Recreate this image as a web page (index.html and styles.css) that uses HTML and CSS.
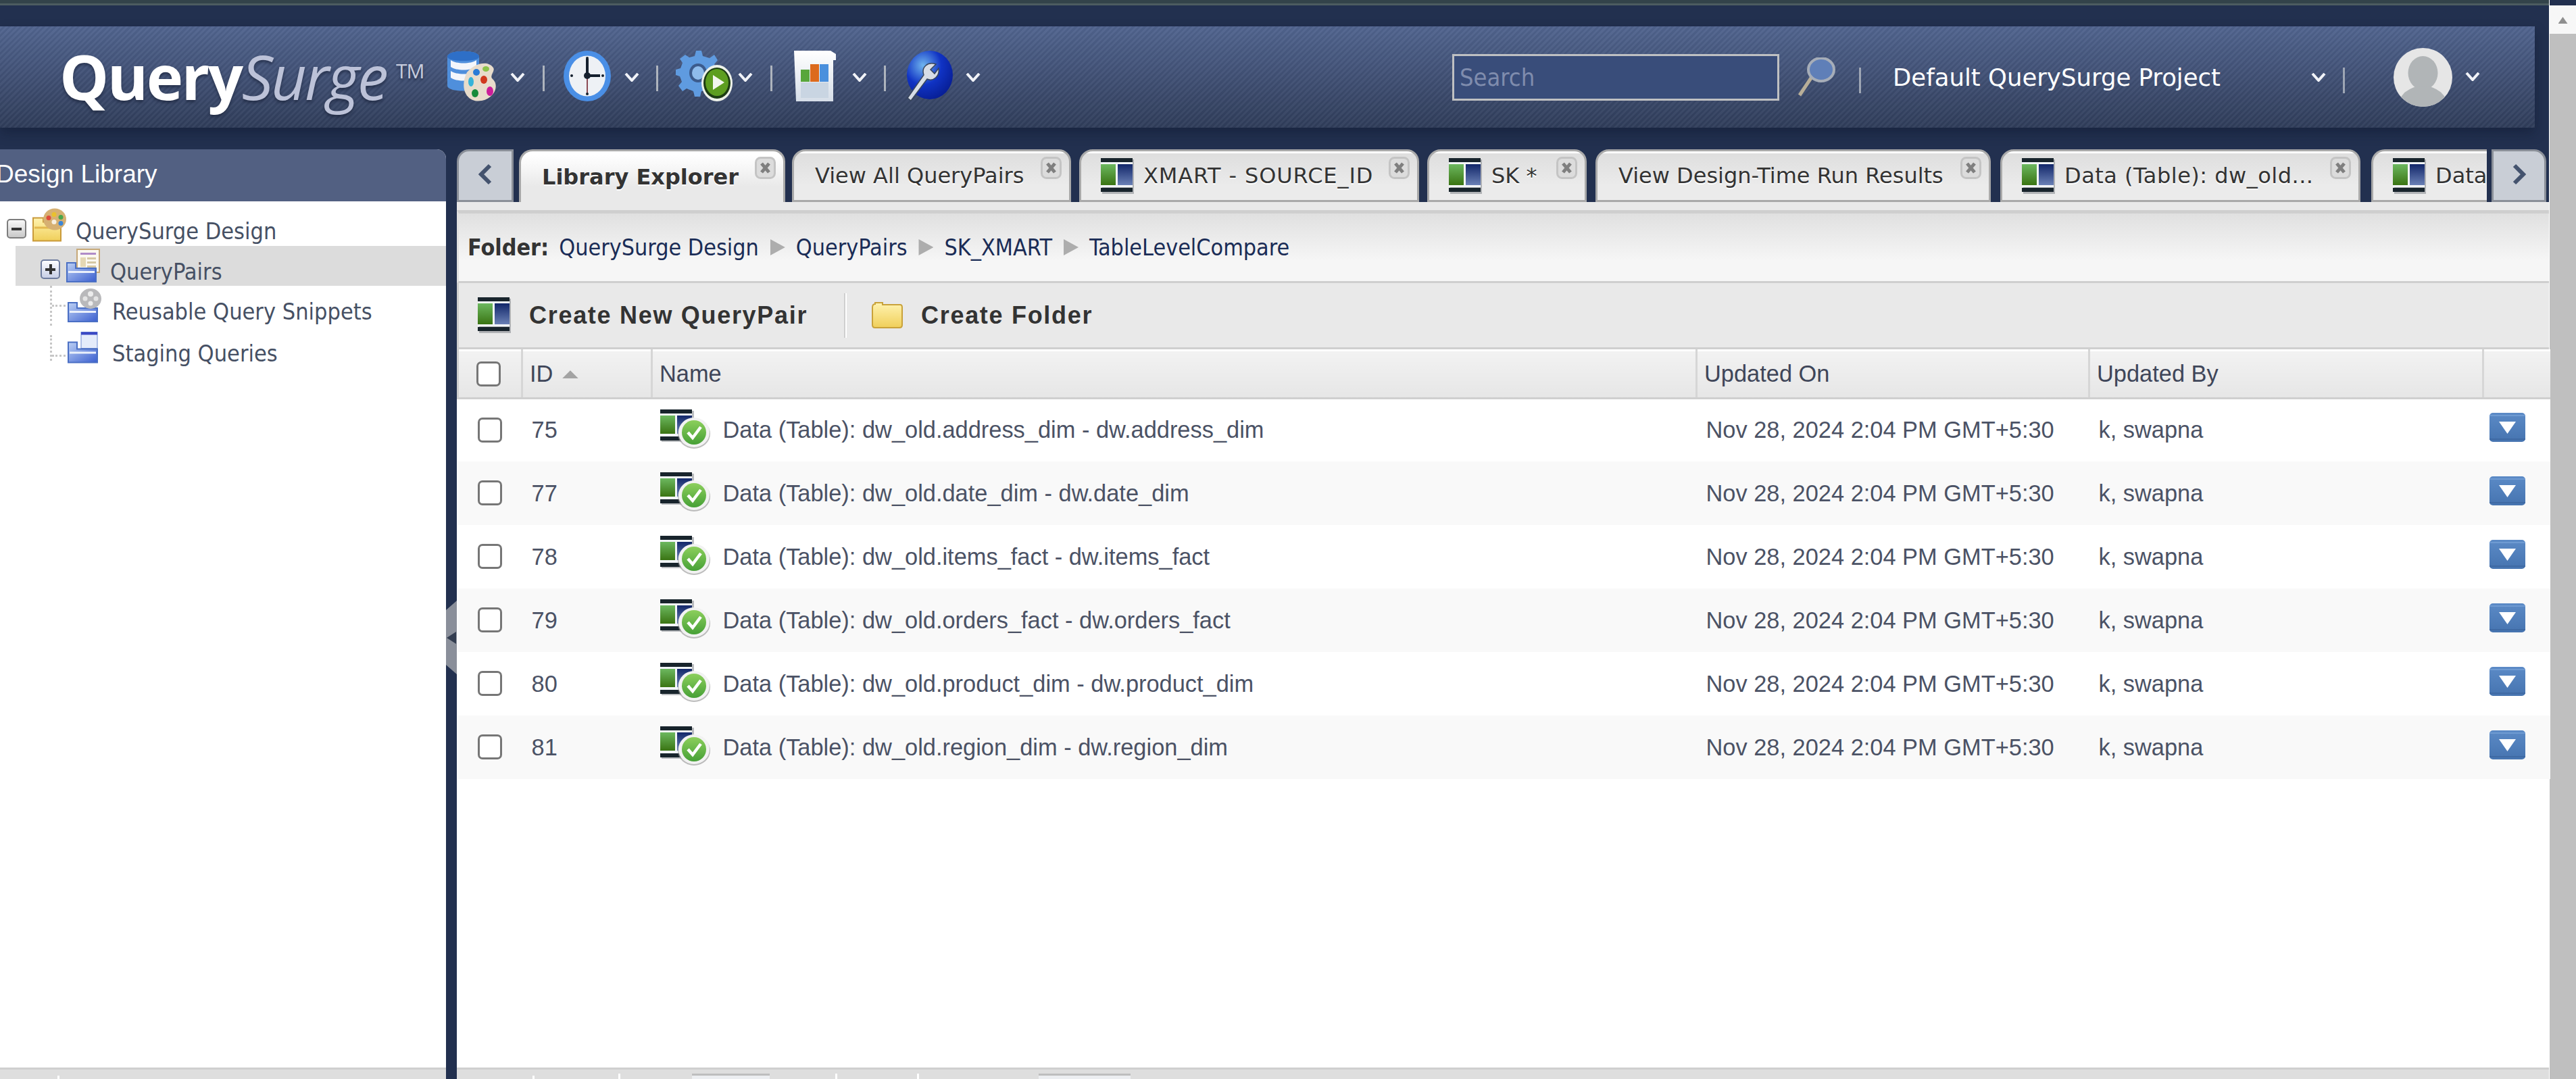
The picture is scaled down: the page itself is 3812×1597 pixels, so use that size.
FILE: index.html
```html
<!DOCTYPE html>
<html lang="en">
<head>
<meta charset="utf-8">
<title>QuerySurge</title>
<link rel="stylesheet" href="styles.css">
</head>
<body>
<svg class="sprite" width="0" height="0" aria-hidden="true">
  <defs>
    <linearGradient id="gGreen" x1="0" y1="0" x2="0" y2="1"><stop offset="0" stop-color="#6cb85f"/><stop offset="1" stop-color="#3a7413"/></linearGradient>
    <linearGradient id="gNavy" x1="0" y1="0" x2="0" y2="1"><stop offset="0" stop-color="#12276a"/><stop offset="1" stop-color="#6a80b5"/></linearGradient>
    <linearGradient id="gYellow" x1="0" y1="0" x2="0" y2="1"><stop offset="0" stop-color="#fff3b0"/><stop offset="1" stop-color="#f0cf5a"/></linearGradient>
    <linearGradient id="gBlueF" x1="0" y1="0" x2="1" y2="1"><stop offset="0" stop-color="#bcd0f4"/><stop offset="1" stop-color="#3b5fd0"/></linearGradient>
    <linearGradient id="gBtn" x1="0" y1="0" x2="0" y2="1"><stop offset="0" stop-color="#5b8ac6"/><stop offset="1" stop-color="#4674b0"/></linearGradient>
    <linearGradient id="gCheck" x1="0" y1="0" x2="0" y2="1"><stop offset="0" stop-color="#8ccf5c"/><stop offset="1" stop-color="#46a036"/></linearGradient>
    <radialGradient id="gGlobe" cx=".35" cy=".3" r=".8"><stop offset="0" stop-color="#6fb4ee"/><stop offset=".5" stop-color="#1033c4"/><stop offset="1" stop-color="#061b8e"/></radialGradient>
    <linearGradient id="gPaper" x1="0" y1="0" x2="0" y2="1"><stop offset="0" stop-color="#ffffff"/><stop offset="1" stop-color="#d6dee8"/></linearGradient>

    <symbol id="i-chev" viewBox="0 0 22 13"><path d="M2 1 L11 11 L20 1" fill="none" stroke="#f1f3f8" stroke-width="4"/></symbol>

    <symbol id="i-pair" viewBox="0 0 49 53" preserveAspectRatio="none">
      <rect x="2" y="2" width="47" height="51" fill="#6b6f75" opacity=".45"/>
      <rect width="47" height="6" fill="#18242c"/>
      <rect y="6" width="47" height="37" fill="#f2f5f8"/>
      <rect y="9" width="22" height="31" fill="url(#gGreen)"/>
      <rect x="25" y="9" width="22" height="31" fill="url(#gNavy)"/>
      <rect y="44" width="47" height="6" fill="#18242c"/>
    </symbol>

    <symbol id="i-pair-ok" viewBox="0 0 74 58" preserveAspectRatio="none">
      <rect x="2" y="2" width="48" height="46" fill="#6b6f75" opacity=".45"/>
      <rect width="47" height="6" fill="#18242c"/>
      <rect y="6" width="47" height="34" fill="#f2f5f8"/>
      <rect y="9" width="22" height="27" fill="url(#gGreen)"/>
      <rect x="25" y="9" width="22" height="27" fill="url(#gNavy)"/>
      <rect y="40" width="47" height="6" fill="#18242c"/>
      <ellipse cx="50" cy="36" rx="24" ry="22" fill="#9a9a9a" opacity=".65"/>
      <ellipse cx="50" cy="34" rx="23" ry="22" fill="#f2f2f2"/>
      <ellipse cx="50" cy="34" rx="18" ry="18" fill="url(#gCheck)"/>
      <path d="M41 34 L48 42 L60 26" fill="none" stroke="#fff" stroke-width="4.500"/>
    </symbol>

    <symbol id="i-close" viewBox="0 0 31 33">
      <rect x="1.5" y="1.5" width="28" height="30" rx="7" fill="#dcdcdc" stroke="#c4c4c4" stroke-width="3"/>
      <path d="M10 10 L21 23 M21 10 L10 23" stroke="#7f7f7f" stroke-width="5"/>
    </symbol>

    <symbol id="i-tool-db" viewBox="0 0 78 75">
      <path d="M1 9 C1 -2 48 -2 48 9 V52 C48 62 1 62 1 52 Z" fill="#4f8fdc"/>
      <path d="M6 14 C14 20 36 20 44 14 V24 C36 30 14 30 6 24 Z M6 30 C14 36 36 36 44 30 V40 C36 46 14 46 6 40 Z" fill="#f3f6fb"/>
      <path d="M1 9 C1 -2 48 -2 48 9 C48 17 1 17 1 9 Z" fill="#2e6fc7"/>
      <path d="M30 32 C44 16 62 16 68 24 C74 30 62 36 68 42 C78 50 72 70 52 74 C30 78 18 56 30 32 Z" fill="#e8dccb"/>
      <ellipse cx="58" cy="27" rx="5" ry="4" fill="#8bc34a"/><ellipse cx="44" cy="32" rx="5" ry="5" fill="#2a7bd6"/><ellipse cx="36" cy="46" rx="4" ry="7" fill="#36b3d9"/><ellipse cx="55" cy="43" rx="5" ry="6" fill="#d0391e"/><ellipse cx="42" cy="63" rx="5" ry="6" fill="#178a3b"/><ellipse cx="64" cy="60" rx="5" ry="7" fill="#cc1f9a"/>
    </symbol>

    <symbol id="i-tool-clock" viewBox="0 0 70 75">
      <ellipse cx="35" cy="37.5" rx="35" ry="37.5" fill="#4a8fe6"/>
      <ellipse cx="35" cy="37.5" rx="27" ry="30" fill="#eef1f5"/>
      <path d="M35 12 V37 H54" fill="none" stroke="#15202e" stroke-width="4"/>
      <path d="M35 37 V64" stroke="#8d4b55" stroke-width="2"/>
      <ellipse cx="35" cy="37" rx="5" ry="5" fill="#15202e"/>
      <circle cx="12" cy="37" r="2" fill="#15202e"/><circle cx="58" cy="37" r="2" fill="#15202e"/><circle cx="35" cy="11" r="2" fill="#15202e"/><circle cx="35" cy="64" r="2" fill="#15202e"/>
    </symbol>

    <symbol id="i-tool-gear" viewBox="0 0 84 75">
      <path d="M30 0 H38 L40 8 L50 11 L57 6 L62 14 L57 20 L60 28 L70 30 V40 L60 42 L56 52 L60 58 L52 64 L46 58 L38 60 L36 68 H28 L26 60 L16 56 L10 60 L4 52 L9 46 L6 38 L0 36 V28 L7 26 L10 18 L6 12 L14 6 L20 10 L28 8 Z" fill="#5f9be0"/>
      <ellipse cx="33" cy="33" rx="13" ry="14" fill="#3c5b8c"/>
      <ellipse cx="33" cy="33" rx="9" ry="10" fill="#8fbcec"/>
      <ellipse cx="61" cy="48" rx="23" ry="27" fill="#eef2ea"/>
      <ellipse cx="61" cy="48" rx="20" ry="23" fill="#1d3d13"/>
      <ellipse cx="61" cy="47" rx="17" ry="20" fill="#5d9e20"/>
      <path d="M55 36 L72 47 L55 58 Z" fill="#f2f6ee"/>
    </symbol>

    <symbol id="i-tool-report" viewBox="0 0 62 75">
      <path d="M0 0 H54 L62 5 V14 H58 V75 H3 Z" fill="url(#gPaper)"/>
      <rect x="10" y="28" width="13" height="18" fill="#58a63b"/>
      <rect x="24" y="20" width="13" height="26" fill="#dc6a1d"/>
      <rect x="38" y="20" width="13" height="26" fill="#4a90dd"/>
      <rect x="10" y="47" width="41" height="23" fill="#c9d5e2"/>
    </symbol>

    <symbol id="i-tool-globe" viewBox="0 0 71 75">
      <ellipse cx="37" cy="36" rx="34" ry="36" fill="url(#gGlobe)"/>
      <path d="M4 70 L28 36 C24 24 34 16 46 20 L38 28 L44 34 L50 26 C52 38 42 46 33 42 L9 74 Z" fill="#d7dde6" stroke="#39465c" stroke-width="1.5"/>
    </symbol>

    <symbol id="i-mag" viewBox="0 0 60 58">
      <path d="M4 56 L24 26" stroke="#b8ae98" stroke-width="5"/>
      <ellipse cx="36" cy="18" rx="19" ry="17" fill="#5f7fb8" stroke="#a6adb8" stroke-width="4"/>
    </symbol>

    <symbol id="i-avatar" viewBox="0 0 87 87">
      <clipPath id="cAvatar"><circle cx="43.5" cy="43.5" r="43.5"/></clipPath>
      <circle cx="43.5" cy="43.5" r="43.5" fill="#e6e6e6"/>
      <g clip-path="url(#cAvatar)"><ellipse cx="43.5" cy="37" rx="22" ry="25" fill="#b1b5b7"/><ellipse cx="43.5" cy="88" rx="37" ry="32" fill="#b1b5b7"/></g>
    </symbol>

    <symbol id="i-folder-yellow" viewBox="0 0 46 39">
      <path d="M1 8 C1 4 3 3 5 3 V1 H16 V4 H42 C44 4 45 6 45 8 V34 C45 37 43 38 41 38 H5 C3 38 1 37 1 34 Z" fill="url(#gYellow)" stroke="#c9a23a" stroke-width="2"/>
    </symbol>

    <symbol id="i-tree-root" viewBox="0 0 50 49">
      <path d="M1 14 H16 V20 H42 V48 H1 Z" fill="url(#gYellow)" stroke="#c99a3a" stroke-width="2"/>
      <rect x="3" y="27" width="38" height="3" fill="#e3b84e"/>
      <ellipse cx="33" cy="16" rx="17" ry="16" fill="#d6b072"/>
      <circle cx="24" cy="14" r="3.5" fill="#e04b3a"/><circle cx="32" cy="9" r="3.5" fill="#e9c12e"/><circle cx="42" cy="13" r="3.5" fill="#4aa64a"/><circle cx="42" cy="22" r="3.5" fill="#3b85d6"/><circle cx="32" cy="20" r="3.5" fill="#f7efe0"/>
    </symbol>

    <symbol id="i-tree-pairs" viewBox="0 0 50 50">
      <rect x="16" y="1" width="33" height="34" fill="#fbf8f0" stroke="#c6a878" stroke-width="2"/>
      <rect x="21" y="6" width="23" height="3" fill="#b08cc8"/>
      <rect x="21" y="13" width="8" height="14" fill="#e5d8b4"/><rect x="31" y="13" width="13" height="3" fill="#d6c8a4"/><rect x="31" y="19" width="13" height="3" fill="#d6c8a4"/><rect x="31" y="25" width="13" height="3" fill="#d6c8a4"/>
      <path d="M1 21 H14 V29 H44 V49 H1 Z" fill="url(#gBlueF)" stroke="#4a6fc4" stroke-width="2"/>
      <rect x="3" y="33" width="39" height="3" fill="#eaf0fb"/>
    </symbol>

    <symbol id="i-tree-snip" viewBox="0 0 50 50">
      <path d="M1 21 H14 V29 H44 V49 H1 Z" fill="url(#gBlueF)" stroke="#4a6fc4" stroke-width="2"/>
      <rect x="3" y="33" width="39" height="3" fill="#eaf0fb"/>
      <ellipse cx="34" cy="15" rx="16" ry="15" fill="#b9b9bb"/>
      <circle cx="34" cy="8" r="4" fill="#ececec"/><circle cx="26" cy="15" r="3.5" fill="#e4e4e4"/><circle cx="42" cy="15" r="3.5" fill="#e4e4e4"/><circle cx="34" cy="22" r="3.5" fill="#ececec"/>
    </symbol>

    <symbol id="i-tree-stage" viewBox="0 0 50 47">
      <rect x="20" y="1" width="24" height="24" fill="#e4ebfa" stroke="#6f8bd2" stroke-width="1"/>
      <rect x="20" y="1" width="24" height="4" fill="#3a48c4"/>
      <path d="M1 16 H14 V26 H44 V46 H1 Z" fill="url(#gBlueF)" stroke="#4a6fc4" stroke-width="2"/>
      <rect x="3" y="30" width="39" height="3" fill="#eaf0fb"/>
    </symbol>

    <symbol id="i-caret" viewBox="0 0 53 43">
      <rect x="0" y="0" width="53" height="43" rx="5" fill="url(#gBtn)"/>
      <rect x="0" y="3" width="53" height="2" fill="#6f9bd2"/>
      <rect x="0" y="38" width="53" height="2" fill="#3f6aa4"/>
      <path d="M14 13 H39 L26.500 31 Z" fill="#fff"/>
    </symbol>
  </defs>
</svg>

<div class="page">
  <div class="app">
    <div class="strip"></div>

    <header class="header">
      <div class="logo"><span class="logo-query">Query</span><span class="logo-surge">Surge</span><span class="logo-tm">TM</span></div>
      <div class="tool"><span class="tool-icon"><svg class="i-db"><use href="#i-tool-db"/></svg></span><svg class="chev"><use href="#i-chev"/></svg></div>
      <div class="tool tool-sep"><span class="tool-icon"><svg class="i-clock"><use href="#i-tool-clock"/></svg></span><svg class="chev"><use href="#i-chev"/></svg></div>
      <div class="tool tool-sep"><span class="tool-icon"><svg class="i-gear"><use href="#i-tool-gear"/></svg></span><svg class="chev"><use href="#i-chev"/></svg></div>
      <div class="tool tool-sep"><span class="tool-icon"><svg class="i-report"><use href="#i-tool-report"/></svg></span><svg class="chev"><use href="#i-chev"/></svg></div>
      <div class="tool tool-sep"><span class="tool-icon"><svg class="i-globe"><use href="#i-tool-globe"/></svg></span><svg class="chev"><use href="#i-chev"/></svg></div>

      <div class="search">Search</div>
      <svg class="mag"><use href="#i-mag"/></svg>
      <span class="hsep hsep-a"></span>
      <span class="project">Default QuerySurge Project</span>
      <svg class="chev chev-project"><use href="#i-chev"/></svg>
      <span class="hsep hsep-b"></span>
      <svg class="avatar"><use href="#i-avatar"/></svg>
      <svg class="chev chev-user"><use href="#i-chev"/></svg>
    </header>

    <div class="workspace">
      <aside class="library">
        <h2 class="library-title">Design Library</h2>
        <ul class="tree">
          <li class="tree-row tree-root">
            <span class="toggle"><span class="toggle-minus"></span></span>
            <svg class="tree-icon ti-root"><use href="#i-tree-root"/></svg>
            <span class="tree-label tl-root">QuerySurge Design</span>
          </li>
          <li class="tree-row tree-selected">
            <span class="toggle toggle-blue"><span class="toggle-minus"></span><span class="toggle-vert"></span></span>
            <svg class="tree-icon ti-root"><use href="#i-tree-pairs"/></svg>
            <span class="tree-label tl-pairs">QueryPairs</span>
          </li>
          <li class="tree-row tree-leaf">
            <span class="conn"></span>
            <svg class="tree-icon"><use href="#i-tree-snip"/></svg>
            <span class="tree-label">Reusable Query Snippets</span>
          </li>
          <li class="tree-row tree-leaf tree-last">
            <span class="conn conn-last"></span>
            <svg class="tree-icon"><use href="#i-tree-stage"/></svg>
            <span class="tree-label">Staging Queries</span>
          </li>
        </ul>
      </aside>

      <div class="splitter"><span class="grip"><span class="grip-arrow"></span></span></div>

      <main class="content">
        <nav class="tabs">
          <button class="tab-nav tab-prev"><svg class="nav-glyph" viewBox="0 0 20 32"><path d="M17 3 L4 16 L17 29" fill="none" stroke="#44536e" stroke-width="6"/></svg></button>
          <div class="tab tab-active t1"><span class="tab-text">Library Explorer</span><svg class="tab-close"><use href="#i-close"/></svg></div>
          <div class="tab t2"><span class="tab-text">View All QueryPairs</span><svg class="tab-close"><use href="#i-close"/></svg></div>
          <div class="tab t3"><svg class="tab-icon"><use href="#i-pair"/></svg><span class="tab-text tab-text-wide">XMART - SOURCE_ID</span><svg class="tab-close"><use href="#i-close"/></svg></div>
          <div class="tab t4"><svg class="tab-icon"><use href="#i-pair"/></svg><span class="tab-text">SK *</span><svg class="tab-close"><use href="#i-close"/></svg></div>
          <div class="tab t5"><span class="tab-text">View Design-Time Run Results</span><svg class="tab-close"><use href="#i-close"/></svg></div>
          <div class="tab t6"><svg class="tab-icon"><use href="#i-pair"/></svg><span class="tab-text tab-text-data">Data (Table): dw_old...</span><svg class="tab-close"><use href="#i-close"/></svg></div>
          <div class="tab t7"><svg class="tab-icon"><use href="#i-pair"/></svg><span class="tab-text">Data (Table): dw_old...</span></div>
          <button class="tab-nav tab-next"><svg class="nav-glyph" viewBox="0 0 20 32"><path d="M3 3 L16 16 L3 29" fill="none" stroke="#44536e" stroke-width="6"/></svg></button>
        </nav>

        <div class="tab-gap"></div>

        <div class="crumbs">
          <strong class="crumb-label">Folder:</strong>
          <a class="crumb">QuerySurge Design</a><span class="crumb-arrow"></span>
          <a class="crumb">QueryPairs</a><span class="crumb-arrow"></span>
          <a class="crumb">SK_XMART</a><span class="crumb-arrow"></span>
          <a class="crumb">TableLevelCompare</a>
        </div>

        <div class="actions">
          <svg class="act-pair"><use href="#i-pair"/></svg>
          <span class="act-text act-text-a">Create New QueryPair</span>
          <span class="act-sep"></span>
          <svg class="act-folder"><use href="#i-folder-yellow"/></svg>
          <span class="act-text">Create Folder</span>
        </div>

        <table class="grid">
          <colgroup><col class="c-check"><col class="c-id"><col class="c-name"><col class="c-date"><col class="c-user"><col class="c-menu"></colgroup>
          <thead>
            <tr>
              <th><span class="check check-head"></span></th>
              <th class="th-pad">ID <span class="sort"></span></th>
              <th class="th-pad">Name</th>
              <th class="th-pad">Updated On</th>
              <th class="th-pad">Updated By</th>
              <th></th>
            </tr>
          </thead>
          <tbody>
            <tr>
              <td><span class="check"></span></td><td class="td-id">75</td>
              <td><span class="name-cell"><svg class="row-icon"><use href="#i-pair-ok"/></svg>Data (Table): dw_old.address_dim - dw.address_dim</span></td>
              <td class="td-pad">Nov 28, 2024 2:04 PM GMT+5:30</td><td class="td-pad">k, swapna</td><td><svg class="row-menu"><use href="#i-caret"/></svg></td>
            </tr>
            <tr>
              <td><span class="check"></span></td><td class="td-id">77</td>
              <td><span class="name-cell"><svg class="row-icon"><use href="#i-pair-ok"/></svg>Data (Table): dw_old.date_dim - dw.date_dim</span></td>
              <td class="td-pad">Nov 28, 2024 2:04 PM GMT+5:30</td><td class="td-pad">k, swapna</td><td><svg class="row-menu"><use href="#i-caret"/></svg></td>
            </tr>
            <tr>
              <td><span class="check"></span></td><td class="td-id">78</td>
              <td><span class="name-cell"><svg class="row-icon"><use href="#i-pair-ok"/></svg>Data (Table): dw_old.items_fact - dw.items_fact</span></td>
              <td class="td-pad">Nov 28, 2024 2:04 PM GMT+5:30</td><td class="td-pad">k, swapna</td><td><svg class="row-menu"><use href="#i-caret"/></svg></td>
            </tr>
            <tr>
              <td><span class="check"></span></td><td class="td-id">79</td>
              <td><span class="name-cell"><svg class="row-icon"><use href="#i-pair-ok"/></svg>Data (Table): dw_old.orders_fact - dw.orders_fact</span></td>
              <td class="td-pad">Nov 28, 2024 2:04 PM GMT+5:30</td><td class="td-pad">k, swapna</td><td><svg class="row-menu"><use href="#i-caret"/></svg></td>
            </tr>
            <tr>
              <td><span class="check"></span></td><td class="td-id">80</td>
              <td><span class="name-cell"><svg class="row-icon"><use href="#i-pair-ok"/></svg>Data (Table): dw_old.product_dim - dw.product_dim</span></td>
              <td class="td-pad">Nov 28, 2024 2:04 PM GMT+5:30</td><td class="td-pad">k, swapna</td><td><svg class="row-menu"><use href="#i-caret"/></svg></td>
            </tr>
            <tr>
              <td><span class="check"></span></td><td class="td-id">81</td>
              <td><span class="name-cell"><svg class="row-icon"><use href="#i-pair-ok"/></svg>Data (Table): dw_old.region_dim - dw.region_dim</span></td>
              <td class="td-pad">Nov 28, 2024 2:04 PM GMT+5:30</td><td class="td-pad">k, swapna</td><td><svg class="row-menu"><use href="#i-caret"/></svg></td>
            </tr>
          </tbody>
        </table>
      </main>
    </div>

    <footer class="footer">
      <div class="foot-left"><span class="foot-tick foot-tick-a"></span></div>
      <div class="foot-split"></div>
      <div class="foot-right">
        <span class="foot-tick foot-tick-b"></span>
        <span class="foot-tick foot-tick-c"></span>
        <span class="foot-box foot-box-a"></span>
        <span class="foot-tick foot-tick-d"></span>
        <span class="foot-tick foot-tick-e"></span>
        <span class="foot-box foot-box-b"></span>
      </div>
    </footer>
  </div>

  <div class="scrollbar"><div class="scroll-track"><span class="scroll-up"></span></div><div class="scroll-thumb"></div></div>
</div>
</body>
</html>
```

FILE: styles.css
```css
* { box-sizing: border-box; }
html, body { margin: 0; padding: 0; width: 3812px; height: 1597px; overflow: hidden; background: #22304f; }
.sprite { position: absolute; }
ul { list-style: none; margin: 0; padding: 0; }
h2 { margin: 0; font-weight: normal; }
button { margin: 0; padding: 0; font: inherit; }

.page { display: flex; width: 3812px; height: 1597px; }
.app { width: 3772px; height: 1597px; display: flex; flex-direction: column; background: #22304f; }

.strip { height: 8px; background: linear-gradient(#33434a 0 5px, #4d5c60 5px); flex: none; }

/* header */
.header {
  flex: none; height: 150px; margin: 31px 21px 32px 0; padding-left: 88px; padding-right: 81px;
  display: flex; align-items: center;
  background:
    repeating-linear-gradient(135deg, rgba(255,255,255,.035) 0 3px, rgba(0,0,0,.035) 3px 6px),
    linear-gradient(#51648f, #303d5a);
  box-shadow: 0 8px 16px rgba(10,18,36,.35);
}
.logo { width: 547px; height: 100%; display: flex; align-items: baseline; padding-top: 11px; font-family: "Open Sans", sans-serif; text-shadow: 0 3px 4px rgba(20,28,50,.6); flex: none; }
.logo-query { font-size: 92px; font-weight: 700; color: #fff; letter-spacing: -2.500px; }
.logo-surge { font-size: 92px; font-weight: 400; font-style: italic; color: #bcc2d8; letter-spacing: -3px; margin-left: 0; }
.logo-tm { font-size: 30px; color: #c6cbdc; align-self: flex-start; margin-top: 34px; margin-left: 14px; font-weight: 400; letter-spacing: -1px; }

.tool { flex: none; width: 168.500px; height: 75px; display: flex; align-items: center; position: relative; margin-top: -3px; }
.tool-sep::before { content: ""; position: absolute; left: -1px; top: 22px; width: 3px; height: 38px; background: #aeb4bd; }
.tool-icon { width: 120px; padding-left: 10px; display: flex; justify-content: center; height: 75px; flex: none; }
.tool-icon svg { height: 75px; flex: none; }
.i-db { width: 78px; } .i-clock { width: 70px; } .i-gear { width: 84px; margin-left: 10px; } .i-report { width: 62px; } .i-globe { width: 71px; }
.chev { width: 22px; height: 13px; flex: none; }
.tool .chev { margin-top: 3px; }

.search { margin-left: auto; width: 484px; height: 69px; flex: none; border: 3px solid #bfc0c2; background: #394d7a; color: #7f8cad; font: 36px/63px "DejaVu Sans Condensed", "DejaVu Sans", sans-serif; padding-left: 8px; }
.mag { width: 60px; height: 58px; margin-left: 26px; flex: none; }
.hsep { width: 3px; height: 38px; background: #9ea6b4; flex: none; margin-top: 10px; }
.hsep-a { margin-left: 32px; }
.project { margin-left: 47px; width: 619px; flex: none; color: #fff; font: 35.500px "DejaVu Sans", sans-serif; white-space: nowrap; }
.chev-project { margin-top: 0; }
.hsep-b { margin-left: 25px; }
.avatar { width: 87px; height: 87px; margin-left: 72px; flex: none; }
.chev-user { margin-left: 19px; margin-top: -2px; }

/* workspace */
.workspace { flex: 1; display: flex; min-height: 0; }
.library { width: 660px; flex: none; background: #fff; display: flex; flex-direction: column; border-top-right-radius: 14px; overflow: hidden; }
.library-title { height: 77px; flex: none; background: #526082; color: #fff; font: 37px/74px "Liberation Sans", sans-serif; text-indent: -6px; }

.tree { padding-top: 7px; font: 34px "DejaVu Sans Condensed", "DejaVu Sans", sans-serif; color: #465064; }
.tree-row { height: 59px; display: flex; align-items: flex-end; margin-left: 23px; }
.tree-root { margin-left: 0; padding-left: 10px; padding-bottom: 6px; }
.tree-selected { background: #dcdcdc; padding-left: 37px; padding-bottom: 5px; }
.tree-leaf { padding-left: 51px; padding-bottom: 5px; }
.tree-last { height: 62px; padding-bottom: 5px; }
.toggle { width: 29px; height: 29px; flex: none; margin-bottom: 5px; border-radius: 5px; background: linear-gradient(#f8f8f8, #c9c9c9); border: 2px solid #7d7d7d; position: relative; display: flex; align-items: center; justify-content: center; }
.toggle-blue { background: linear-gradient(#fdfdff, #c8cfe6); border-color: #6e7c9e; }
.toggle-minus { width: 15px; height: 4px; background: #333; display: block; }
.toggle-vert { position: absolute; width: 4px; height: 15px; background: #333; left: 10.500px; top: 5px; }
.tree-icon { width: 50px; height: 50px; flex: none; }
.ti-root { margin-left: 9px; }
.tree-label { margin-left: 16px; margin-bottom: -6px; line-height: 44px; white-space: nowrap; }
.tl-root { margin-left: 14px; }
.tl-pairs { margin-left: 15px; }
.conn { width: 26px; height: 59px; flex: none; margin-bottom: -5px; border-left: 3px dotted #c6c6c6; position: relative; align-self: flex-end; }
.conn::after { content: ""; position: absolute; left: 0; right: 3px; bottom: 28px; border-top: 3px dotted #c6c6c6; }
.conn-last { height: 38px; margin-bottom: 5px; }
.conn-last::after { bottom: 6px; }

.splitter { width: 16px; flex: none; position: relative; }
.grip { position: absolute; left: 0; top: 668px; width: 16px; height: 109px; background: #8a8f9a; clip-path: polygon(0 14px, 16px 0, 16px 109px, 0 95px); }
.grip-arrow { position: absolute; left: 1px; top: 46px; width: 14px; height: 18px; background: #333d50; clip-path: polygon(0 50%, 100% 0, 100% 100%); }

/* tabs */
.content { flex: 1; min-width: 0; display: flex; flex-direction: column; background: #fff; position: relative; }
.tabs { height: 78px; flex: none; display: flex; background: #22304f; overflow: hidden; }
.tab-nav { height: 78px; flex: none; display: flex; align-items: center; justify-content: center; background: #c9ced6; border: 3px solid #8a8f98; }
.tab-prev { width: 84px; border-top-left-radius: 18px; }
.tab-next { width: 81px; margin-left: 7px; border-top-right-radius: 18px; }
.nav-glyph { width: 20px; height: 32px; margin-top: -4px; }
.tab {
  height: 78px; flex: none; position: relative; overflow: hidden; display: flex; align-items: center; padding-left: 31px;
  border: 3px solid #a9a9a9; border-top-left-radius: 20px; border-top-right-radius: 18px;
  background: linear-gradient(#fff 0 3px, #dedede 3px, #ebebeb 70%);
  font: 32px "DejaVu Sans", sans-serif; color: #333; text-shadow: 0 2px 0 #fff; white-space: nowrap;
}
.tab-text-wide { letter-spacing: .9px; }
.tab-text-data { letter-spacing: .5px; }
.tab-active { border-bottom: 0; background: linear-gradient(#fff 6px, #e9e9e9 70%); font-weight: bold; }
.tab-icon { width: 49px; height: 53px; flex: none; margin-left: -2px; margin-right: 14px; }
.tab-close { width: 31px; height: 33px; position: absolute; right: 11px; top: 8px; }
.t1 { width: 394px; margin-left: 8px; }
.t2 { width: 413px; margin-left: 10px; }
.t3 { width: 503px; margin-left: 12px; }
.t4 { width: 236px; margin-left: 12px; }
.t5 { width: 585px; margin-left: 13px; }
.t6 { width: 533px; margin-left: 14px; }
.t7 { width: 171px; margin-left: 16px; border-right: 0; border-top-right-radius: 0; }

.tab-gap { height: 12px; flex: none; background: #e9e9e9; }

.crumbs { height: 108px; flex: none; display: flex; align-items: center; padding-left: 13px; border-top: 5px solid #cfcfcf; border-bottom: 3px solid #cfcfcf; border-left: 3px solid #e0e0e0; background: linear-gradient(#e0e0e0, #f6f6f6 70%); font: 33.800px "DejaVu Sans Condensed", "DejaVu Sans", sans-serif; white-space: nowrap; }
.crumb-label { color: #333; margin-right: 15px; font-weight: bold; }
.crumb { color: #1a2c56; }
.crumb-arrow { width: 22px; height: 24px; margin: 0 16px 0 17px; background: #adadad; clip-path: polygon(0 0, 100% 50%, 0 100%); flex: none; }

.actions { height: 98px; flex: none; display: flex; align-items: center; padding-left: 28px; background: #e9e9e9; border-left: 3px solid #cfcfcf; border-bottom: 3px solid #cfcfcf; }
.act-pair { width: 49px; height: 53px; flex: none; }
.act-text { font: bold 36px "Liberation Sans", sans-serif; color: #333; letter-spacing: 1.700px; margin-left: 27px; white-space: nowrap; }
.act-text-a { margin-left: 27px; width: 466px; }
.act-sep { width: 4px; height: 66px; flex: none; background: linear-gradient(90deg, #cfcfcf 50%, #fff 50%); }
.act-folder { width: 46px; height: 39px; margin-left: 37px; flex: none; }

/* table */
.grid { width: 3096px; table-layout: fixed; border-collapse: collapse; font: 34.400px "Liberation Sans", sans-serif; color: #4b5265; flex: none; }
.c-check { width: 95px; } .c-id { width: 192px; } .c-name { width: 1546px; } .c-date { width: 581px; } .c-user { width: 583px; } .c-menu { width: 99px; }
.grid thead tr { height: 72px; }
.grid th { padding: 3px 0 0; text-align: left; font-weight: normal; color: #3f4659; background: linear-gradient(#fff 0 3px, #f2f2f2 3px, #e6e6e6); border-bottom: 3px solid #cfcfcf; border-right: 3px solid #d6d6d6; border-left: 3px solid #fff; }
.grid th:first-child { border-left: 3px solid #cfcfcf; }
.grid th:last-child { border-right: 0; }
.th-pad { padding-left: 10px !important; }
.sort { display: inline-block; width: 24px; height: 12px; background: #a3a3a3; clip-path: polygon(50% 0, 100% 100%, 0 100%); margin-left: 4px; vertical-align: 5px; }
.grid tbody tr { height: 94px; background: #fff; }
.grid tbody tr:nth-child(even) { background: #f9f9f9; }
.grid td { padding: 0; white-space: nowrap; }
.check { display: block; width: 36px; height: 37px; margin-left: 29px; margin-top: -1px; border: 3px solid #767676; border-radius: 7px; background: #fff; }
.check-head { margin-left: 26px; }
.td-id { padding-left: 14px !important; }
.td-pad { padding-left: 14px !important; }
.name-cell { display: flex; align-items: center; margin-left: 12px; }
.row-icon { width: 74px; height: 58px; margin-right: 19px; margin-top: -4px; flex: none; }
.row-menu { width: 53px; height: 43px; display: block; margin-left: 9px; margin-top: -8px; }

/* footer */
.footer { height: 17px; flex: none; display: flex; }
.foot-left { width: 660px; background: #dedede; border-top: 3px solid #cfcfcf; position: relative; }
.foot-split { width: 16px; background: #22304f; }
.foot-right { flex: 1; background: #dedede; border-top: 3px solid #cfcfcf; position: relative; }
.foot-tick { position: absolute; bottom: 0; width: 3px; background: #fff; height: 8px; }
.foot-tick-a { left: 85px; height: 5px; }
.foot-tick-b { left: 112px; height: 5px; }
.foot-tick-c { left: 239px; }
.foot-tick-d { left: 560px; }
.foot-tick-e { left: 681px; }
.foot-box { position: absolute; bottom: 0; height: 8px; background: linear-gradient(#bebebe 3px, #eceef1 3px); }
.foot-box-a { left: 348px; width: 115px; }
.foot-box-b { left: 861px; width: 136px; }

/* scrollbar */
.scrollbar { width: 40px; flex: none; display: flex; flex-direction: column; background: #fff; border-left: 1px solid #fff; }
.scroll-track { height: 50px; background: linear-gradient(#22304f 8px, #f7f7f7 8px); display: flex; justify-content: center; flex: none; position: relative; }
.scroll-up { width: 14px; height: 10px; background: #8f8f8f; margin-top: 25px; clip-path: polygon(50% 0, 100% 100%, 0 100%); }
.scroll-thumb { flex: 1; background: #bfbfbf; }
```
